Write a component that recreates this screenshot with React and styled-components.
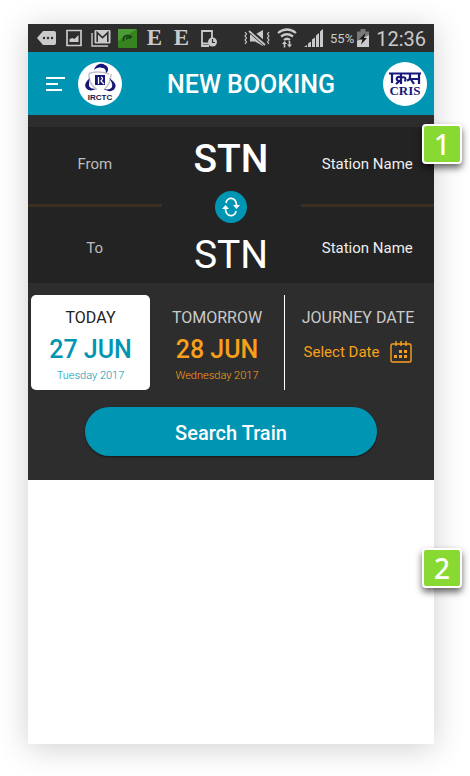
import React from "react";
import styled, { createGlobalStyle, css } from "styled-components";

const teal = "#0095b3";
const orange = "#f9a01b";
const panel = "#2d2d2d";
const silver = "#cacaca";

const GlobalStyle = createGlobalStyle`
  *, *::before, *::after { box-sizing: border-box; }
  body { margin: 0; background: #fff; font-family: Roboto, sans-serif; }
  button { font: inherit; color: inherit; background: none; border: 0; padding: 0; cursor: pointer; }
`;

const Page = styled.div`
  display: flex;
  min-height: 100vh;
  padding: 24px 36px 32px 28px;
`;

const Phone = styled.div`
  position: relative;
  flex: 1;
  min-width: 0;
  background: #fff;
  box-shadow: 0 4px 30px rgba(0, 0, 0, 0.19);
`;

const StatusBar = styled.div`
  display: flex;
  align-items: center;
  justify-content: space-between;
  height: 28px;
  padding: 0 8px 0 5px;
  background: ${panel};
  color: ${silver};
`;

const Notices = styled.div`
  display: grid;
  grid-auto-flow: column;
  grid-auto-columns: 27px;
  place-items: center;
`;

const StatusSvg = styled.svg`
  display: block;
  flex: none;
`;

const Letter = styled.span`
  font: bold 23px/28px "Liberation Serif", serif;
`;

const Signals = styled.div`
  display: flex;
  align-items: center;
  gap: 7px;
`;

const Battery = styled.span`
  display: flex;
  align-items: center;
  gap: 3px;
  font-size: 13px;
`;

const Clock = styled.time`
  font-size: 20px;
  line-height: 28px;
  padding-top: 2px;
`;

const Header = styled.header`
  display: grid;
  grid-template-columns: 94px 1fr 51px;
  align-items: center;
  height: 63px;
  background: ${teal};
  color: #fff;
`;

const Brand = styled.div`
  display: flex;
  align-items: center;
  gap: 12px;
  padding-left: 18px;
`;

const MenuButton = styled.button`
  display: block;
  line-height: 0;
`;

const Title = styled.h1`
  margin: 0;
  padding: 2px 3px 0 0;
  text-align: center;
  font-size: 25px;
  line-height: 28px;
  font-weight: 500;
  white-space: nowrap;
`;

const Logo = styled.svg`
  display: block;
  flex: none;
  width: 44px;
  height: 44px;
`;

const Booking = styled.section`
  padding-top: 12px;
  padding-bottom: 24px;
  background: ${panel};
`;

const Route = styled.div`
  display: grid;
  grid-template-columns: 1fr 139px 1fr;
  background: #232323;
`;

const Side = styled.div`
  display: flex;
  flex-direction: column;
  align-items: center;
  padding: 25px 0 23px;
  font-size: 15px;
  line-height: 24px;
  color: ${(p) => (p.$bright ? "#eeeeee" : "#bdbdbd")};
`;

const Rule = styled.hr`
  width: 100%;
  height: 3px;
  margin: 28px 0 29px;
  border: 0;
  background: #3c2e21;
`;

const Stations = styled.div`
  display: flex;
  flex-direction: column;
  align-items: center;
  gap: 12px;
  padding: 12px 0 8px;
`;

const Station = styled.button`
  font-size: 39px;
  line-height: 40px;
  color: #fff;
  font-weight: ${(p) => (p.$active ? 500 : 400)};
`;

const Swap = styled.button`
  display: grid;
  place-items: center;
  width: 32px;
  height: 32px;
  border-radius: 50%;
  background: ${teal};
`;

const Dates = styled.div`
  display: grid;
  grid-template-columns: 119fr 134fr 147fr;
  margin: 12px 3px 0;
`;

const dateCell = css`
  display: flex;
  flex-direction: column;
  align-items: center;
  height: 95px;
  padding-top: 12px;
`;

const DateOption = styled.button`
  ${dateCell}
  border-radius: 5px;
  color: ${(p) => (p.$selected ? teal : orange)};
  background: ${(p) => (p.$selected ? "#fff" : "transparent")};
`;

const PickDate = styled.div`
  ${dateCell}
  border-left: 1px solid #fff;
`;

const DateTitle = styled.span`
  font-size: 16px;
  line-height: 22px;
  color: ${(p) => (p.$dark ? "#222" : silver)};
`;

const DateValue = styled.strong`
  margin-top: 5px;
  font-size: 25px;
  line-height: 32px;
  font-weight: 500;
`;

const DateNote = styled.span`
  margin-top: 2px;
  font-size: 11px;
  line-height: 16px;
  font-weight: 300;
`;

const SelectDate = styled.button`
  display: flex;
  align-items: center;
  gap: 11px;
  margin-top: 12px;
  font-size: 15px;
  line-height: 22px;
  color: ${orange};
`;

const Search = styled.button`
  display: block;
  width: 72%;
  height: 49px;
  margin: 17px auto 0;
  padding-top: 2px;
  border-radius: 25px;
  background: ${teal};
  box-shadow: 0 1px 2px rgba(0, 0, 0, 0.5);
  color: #fff;
  font-size: 20px;
  line-height: 24px;
  font-weight: 500;
`;

const Callout = styled.span`
  position: absolute;
  top: ${(p) => p.$top}px;
  right: -28px;
  display: grid;
  place-items: center;
  width: 40px;
  height: 40px;
  border: 2px solid #fff;
  border-radius: 4px;
  background: #88d931;
  box-shadow: 0 4px 7px rgba(0, 0, 0, 0.6);
  color: #fff;
  font: 500 28px/36px "Noto Sans", sans-serif;
`;

function NoticeIcons() {
  return (
    <Notices>
      <StatusSvg width="19" height="16" viewBox="0 0 19 16">
        <path fill={silver} d="M6 1h11a2 2 0 0 1 2 2v10a2 2 0 0 1-2 2H6L0 8z" />
        <g fill={panel}>
          <circle cx="7" cy="8" r="1.2" />
          <circle cx="11" cy="8" r="1.2" />
          <circle cx="15" cy="8" r="1.2" />
        </g>
      </StatusSvg>
      <StatusSvg width="16" height="18" viewBox="0 0 16 18">
        <path fill="none" stroke={silver} strokeWidth="1.7" d="M1 1.5h14v15H1z" />
        <path fill={silver} d="M3.5 13V10l3-1 2 1 4-4v7z" />
      </StatusSvg>
      <StatusSvg width="20" height="17" viewBox="0 0 20 17">
        <path fill="none" stroke={silver} strokeWidth="1.4" d="M1 3v13h16" />
        <rect x="3.5" y="0" width="16" height="13.5" rx="1" fill={silver} />
        <path fill="none" stroke={panel} strokeWidth="1.6" d="M6.2 12V2.6l5.3 5 5.3-5V12" />
      </StatusSvg>
      <StatusSvg width="19" height="19" viewBox="0 0 19 19">
        <rect width="19" height="19" rx="1" fill="#36831f" />
        <path fill="#4d9a37" d="M0 0h19L0 12z" />
        <path fill="none" stroke="#133d13" strokeWidth="1.6" d="M5.5 12C4.5 6 10 5.5 14 8M8.5 10.5c0-2.5 3-2.5 4-1" />
      </StatusSvg>
      <Letter>E</Letter>
      <Letter>E</Letter>
      <StatusSvg width="16" height="17" viewBox="0 0 16 17">
        <path fill="none" stroke={silver} strokeWidth="1.8" d="M11 8V1H1v15h7M1 13.5h7" />
        <circle cx="11.5" cy="12" r="4.5" fill={silver} />
        <path fill="none" stroke={panel} strokeWidth="1.2" d="M11.5 9v3.5H14" />
      </StatusSvg>
    </Notices>
  );
}

function SignalIcons() {
  return (
    <Signals>
      <StatusSvg width="26" height="16" viewBox="0 0 26 16">
        <path fill={silver} d="M6 4.5h5l8-4.5v16l-8-4.5H6z" />
        <path stroke={panel} strokeWidth="4.5" d="M5 0l17 15" />
        <path stroke={silver} strokeWidth="1.8" d="M5 1l16 14" />
        <path fill="none" stroke={silver} strokeWidth="1.2" d="M1 2l1.5 2L1 6l1.5 2L1 10l1.5 2L1 14M25 2l-1.5 2L25 6l-1.5 2 1.5 2-1.5 2 1.5 2" />
      </StatusSvg>
      <StatusSvg width="20" height="20" viewBox="0 0 20 20">
        <g fill="none" stroke={silver} strokeWidth="2.2">
          <path d="M1 5q9-7 18 0M4 8.5q6-4.5 12 0M7 12q3-2.5 6 0" />
        </g>
        <path fill={silver} d="M7.5 13l2.5 3H8.3v3.5H6.7V16H5zM12.5 19.5l-2.5-3h1.700V13h1.6v3.5H15z" />
      </StatusSvg>
      <StatusSvg width="19" height="18" viewBox="0 0 19 18">
        <path fill={silver} d="M0 18l3-2v2zM4 14.5l3-2V18H4zM8 10.5l3-2V18H8zM12 6.5l3-2.5v14h-3zM16 2.5L19 0v18h-3z" />
      </StatusSvg>
      <Battery>
        55%
        <StatusSvg width="12" height="18" viewBox="0 0 12 18">
          <path fill="#777" d="M3.5 0h5v2.5H12V18H0V2.5h3.5z" />
          <path fill={silver} d="M0 12l12-6v12H0z" />
          <path fill="#181818" d="M8.5 4L2 10.5h3.5L4 15.5 10 9H7z" />
        </StatusSvg>
      </Battery>
      <Clock dateTime="12:36">12:36</Clock>
    </Signals>
  );
}

function IrctcLogo() {
  return (
    <Logo viewBox="0 0 44 44" role="img" aria-label="IRCTC">
      <circle cx="22" cy="22" r="22" fill="#fff" />
      <g fill="none" stroke="#c3c1cc" strokeWidth="1.5">
        <path d="M11 11.5q10-3 20 .5M33 12q0 9-7 16M11 11.5q-1 10 8 16" />
      </g>
      <g fill="#171778">
        <path d="M16 8c1-5 7-8 11-5 4 2 4 6 1 8 0-3-1-5-4-5-3-1-6 0-8 2z" />
        <path d="M31 16c5 3 8 7 6 10-2 4-7 4-11 1 4 1 7 0 8-2 1-3-1-6-3-9z" />
        <path d="M12 16c-4 3-6 7-4 10s6 3 10 1c-4 0-6-1-7-3 0-3 0-6 1-8z" />
        <path d="M17 13h10v10H17z" />
      </g>
      <path fill="none" stroke="#fff" strokeWidth="1.3" d="M20.5 22v-7M23 15q3 1 0 4l3 3" />
      <text x="22" y="38" textAnchor="middle" fill="#171748" fontFamily="Liberation Sans, sans-serif" fontWeight="700" fontSize="8">IRCTC</text>
    </Logo>
  );
}

function CrisLogo() {
  return (
    <Logo viewBox="0 0 44 44" role="img" aria-label="CRIS">
      <circle cx="22" cy="22" r="22" fill="#fff" />
      <g fill="none" stroke="#17177a" strokeWidth="2.2">
        <path d="M6 11.5h32M9 21v-9M18 12v10M18 15.5c-5-2.5-6 4-1 3.5M18 15.500c5-1 5 1 4 4M17 18.500l-4 3.500M27 12v3q0 3-3 3.500M26 17h10M28 17.500l3 4.500M36 12v10" />
      </g>
      <text x="22" y="33" textAnchor="middle" fill="#17177a" fontFamily="Liberation Serif, serif" fontWeight="700" fontSize="13">CRIS</text>
    </Logo>
  );
}

function SwapIcon() {
  return (
    <svg width="18" height="20" viewBox="0 0 18 20" aria-hidden="true">
      <g fill="none" stroke="#fff" strokeWidth="1.7">
        <path d="M4 6C5-.5 14-.5 14.500 8M14 14C13 20.500 4 20.500 3.500 12" />
      </g>
      <path fill="#fff" d="M11 8h7l-3.5 4zM0 12h7L3.5 8z" />
    </svg>
  );
}

function CalendarIcon() {
  return (
    <svg width="22" height="22" viewBox="0 0 22 22" aria-hidden="true">
      <g fill="none" stroke={orange} strokeWidth="1.4">
        <rect x="1" y="3" width="20" height="18" rx="1.5" />
        <path d="M6 0v5M11 0v5M16 0v5" />
      </g>
      <path fill={orange} d="M9 9h3v3H9zM14 9h3v3h-3zM4 14h3v3H4zM9 14h3v3H9zM14 14h3v3h-3z" />
    </svg>
  );
}

export default function App() {
  return (
    <>
      <GlobalStyle />
      <Page>
        <Phone>
          <StatusBar>
            <NoticeIcons />
            <SignalIcons />
          </StatusBar>
          <Header>
            <Brand>
              <MenuButton aria-label="Menu">
                <svg width="20" height="16" viewBox="0 0 20 16">
                  <path stroke="#fff" strokeWidth="2" d="M0 2h19M0 8h12M0 14h16" />
                </svg>
              </MenuButton>
              <IrctcLogo />
            </Brand>
            <Title>NEW BOOKING</Title>
            <CrisLogo />
          </Header>
          <main>
            <Booking>
              <Route>
                <Side>
                  <span>From</span>
                  <Rule />
                  <span>To</span>
                </Side>
                <Stations>
                  <Station $active>STN</Station>
                  <Swap aria-label="Swap stations">
                    <SwapIcon />
                  </Swap>
                  <Station>STN</Station>
                </Stations>
                <Side $bright>
                  <span>Station Name</span>
                  <Rule />
                  <span>Station Name</span>
                </Side>
              </Route>
              <Dates>
                <DateOption $selected>
                  <DateTitle $dark>TODAY</DateTitle>
                  <DateValue>27 JUN</DateValue>
                  <DateNote>Tuesday 2017</DateNote>
                </DateOption>
                <DateOption>
                  <DateTitle>TOMORROW</DateTitle>
                  <DateValue>28 JUN</DateValue>
                  <DateNote>Wednesday 2017</DateNote>
                </DateOption>
                <PickDate>
                  <DateTitle>JOURNEY DATE</DateTitle>
                  <SelectDate>
                    Select Date
                    <CalendarIcon />
                  </SelectDate>
                </PickDate>
              </Dates>
              <Search>Search Train</Search>
            </Booking>
          </main>
          <Callout $top={100}>1</Callout>
          <Callout $top={524}>2</Callout>
        </Phone>
      </Page>
    </>
  );
}
